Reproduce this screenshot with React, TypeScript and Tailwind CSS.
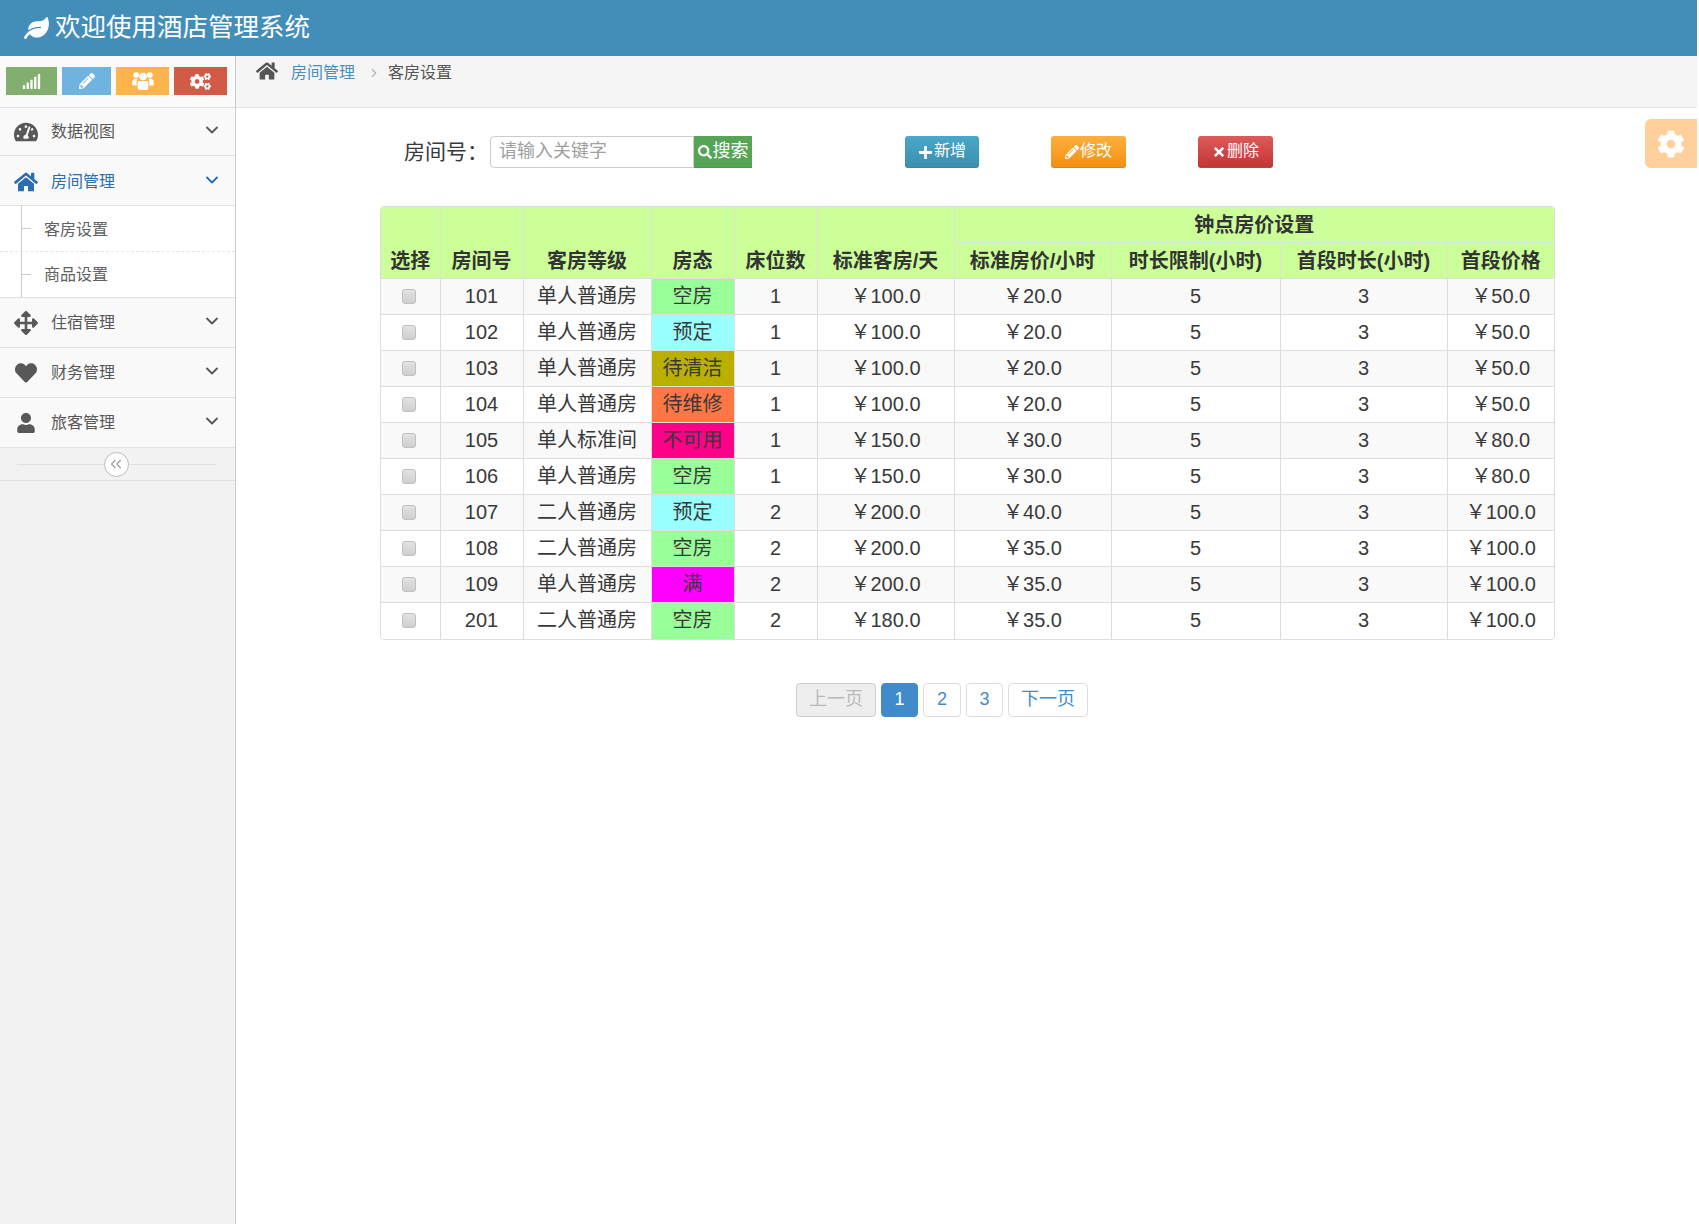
import React from 'react';
import {
  FaLeaf, FaSignal, FaPencilAlt, FaCogs, FaTachometerAlt, FaHome, FaArrowsAlt, FaHeart, FaUser,
  FaSearch, FaPlus, FaTimes, FaCog,
} from 'react-icons/fa';
import { ChevronDown, ChevronRight, ChevronsLeft } from 'lucide-react';

const font = 'font-["Liberation_Sans","Noto_Sans_CJK_SC",sans-serif]';

const menu = [
  { label: '数据视图', icon: <FaTachometerAlt className="w-[24px] h-[22px]" /> },
  { label: '房间管理', icon: <FaHome className="w-[24px] h-[22px]" />, active: true },
  { label: '住宿管理', icon: <FaArrowsAlt className="w-[24px] h-[24px]" /> },
  { label: '财务管理', icon: <FaHeart className="w-[24px] h-[22px]" /> },
  { label: '旅客管理', icon: <FaUser className="w-[20px] h-[20px]" /> },
];

const columns = [59, 83, 128, 83, 83, 137, 157, 169, 167, 107];

const status: Record<string, string> = {
  空房: 'bg-[#99ff99]',
  预定: 'bg-[#99ffff]',
  待清洁: 'bg-[#bbb000]',
  待维修: 'bg-[#ff7744]',
  不可用: 'bg-[#ff0088]',
  满: 'bg-[#ff00ff]',
};

const rooms = [
  ['101', '单人普通房', '空房', '1', '100.0', '20.0', '5', '3', '50.0'],
  ['102', '单人普通房', '预定', '1', '100.0', '20.0', '5', '3', '50.0'],
  ['103', '单人普通房', '待清洁', '1', '100.0', '20.0', '5', '3', '50.0'],
  ['104', '单人普通房', '待维修', '1', '100.0', '20.0', '5', '3', '50.0'],
  ['105', '单人标准间', '不可用', '1', '150.0', '30.0', '5', '3', '80.0'],
  ['106', '单人普通房', '空房', '1', '150.0', '30.0', '5', '3', '80.0'],
  ['107', '二人普通房', '预定', '2', '200.0', '40.0', '5', '3', '100.0'],
  ['108', '二人普通房', '空房', '2', '200.0', '35.0', '5', '3', '100.0'],
  ['109', '单人普通房', '满', '2', '200.0', '35.0', '5', '3', '100.0'],
  ['201', '二人普通房', '空房', '2', '180.0', '35.0', '5', '3', '100.0'],
];

const th = 'border-l border-[#dde6cc] first:border-l-0 px-0 font-bold text-[20px] text-[#333] text-center align-bottom';
const td = 'border-l border-t border-[#dddddd] first:border-l-0 p-0 pb-[2px] text-[20px] text-[#393939] text-center';

// FA4 style group icon, the one in the package is too flat
const UsersIcon = () => (
  <svg viewBox="0 0 24 22" className="w-[22px] h-[20px]" fill="currentColor">
    <circle cx="4.5" cy="4.5" r="3.2" />
    <circle cx="19.5" cy="4.5" r="3.2" />
    <circle cx="12" cy="6" r="4.2" />
    <path d="M0 15c0-4 1-6.500 3-6.500h2.500C5 10 5 11.500 5 13v3H1.500C.5 16 0 15.700 0 15z" />
    <path d="M24 15c0-4-1-6.500-3-6.500h-2.500c.5 1.500.5 3 .5 4.500v3h3.500c1 0 1.500-.3 1.500-1z" />
    <path d="M6.500 11c1.500 0 2.500 0 5.500 0s4 0 5.500 0c.5 2 .5 4 .5 6.500 0 2-1 3.500-3 3.500H9c-2 0-3-1.500-3-3.500 0-2.500 0-4.500.5-6.500z" />
  </svg>
);

const Sidebar = () => (
  <aside className="w-[236px] shrink-0 bg-[#f2f2f2] border-r border-[#cccccc]">
    <div className="h-[52px] flex items-start gap-[5px] pl-[6px] pt-[11px] bg-[#fafafa] border-b border-[#e0e0e0]">
      <div className="w-[51px] h-[28px] bg-[#82af6f] text-white flex items-center justify-center"><FaSignal className="w-[19px] h-[15px]" /></div>
      <div className="w-[49px] h-[28px] bg-[#6fb3e0] text-white flex items-center justify-center"><FaPencilAlt className="w-[16px] h-[16px]" /></div>
      <div className="w-[53px] h-[28px] bg-[#ffb44b] text-white flex items-center justify-center"><UsersIcon /></div>
      <div className="w-[53px] h-[28px] bg-[#d15b47] text-white flex items-center justify-center"><FaCogs className="w-[21px] h-[19px]" /></div>
    </div>
    {menu.map((m, i) => (
      <React.Fragment key={m.label}>
        <div className={`flex items-center bg-[#f9f9f9] border-b border-[#e0e0e0] ${i === 0 ? 'h-[48px]' : 'h-[50px]'} ${m.active ? 'pt-[2px] text-[#2b6eb0]' : 'text-[#585858]'}`}>
          <span className="ml-[14px] w-[24px] mr-[13px] flex justify-center shrink-0">{m.icon}</span>
          <span className="text-[16px]">{m.label}</span>
          <ChevronDown className="ml-auto mr-[13px] mb-[4px] w-[20px] h-[20px]" strokeWidth={2.2} />
        </div>
        {m.active && (
          <div className="bg-white border-b border-[#e0e0e0] relative">
            <div className="absolute left-[21px] top-0 bottom-0 border-l border-[#cccccc]" />
            {['客房设置', '商品设置'].map((s, j) => (
              <div key={s} className={`flex items-center pl-[44px] text-[16px] text-[#616161] relative ${j === 0 ? 'h-[46px] pt-[2px] border-b border-dashed border-[#e4e4e4]' : 'h-[45px]'}`}>
                <span className="absolute left-[21px] top-[22px] w-[10px] border-t border-[#cccccc]" />
                {s}
              </div>
            ))}
          </div>
        )}
      </React.Fragment>
    ))}
    <div className="h-[33px] flex items-center justify-center relative border-b border-[#e0e0e0] pr-[3px]">
      <div className="absolute left-[17px] w-[199px] top-[16px] border-t border-[#e0e0e0]" />
      <div className="relative w-[25px] h-[25px] rounded-full bg-white border border-[#bbbbbb] text-[#999999] flex items-center justify-center">
        <ChevronsLeft className="w-[18px] h-[18px]" strokeWidth={1.5} />
      </div>
    </div>
  </aside>
);

const ActionButton = ({ icon, label, className }: { icon: React.ReactNode; label: string; className: string }) => (
  <button className={`h-[32px] rounded-[3px] text-white text-[16px] flex items-center justify-center gap-[1px] border-b border-black/20 pb-[2px] ${className}`}>
    {icon}
    {label}
  </button>
);

const PageButton = ({ children, className }: { children: React.ReactNode; className: string }) => (
  <button className={`h-[34px] rounded-[4px] text-[18px] border flex items-center justify-center ${className}`}>{children}</button>
);

export default function App() {
  return (
    <div className={`${font} min-h-[1224px] flex flex-col bg-white mr-[2px]`}>
      <header className="h-[56px] bg-[#438eb9] flex items-center pl-[23px] text-white">
        <FaLeaf className="w-[27px] h-[22px]" />
        <span className="text-[25.5px] ml-[5px] mb-[2px]">欢迎使用酒店管理系统</span>
      </header>
      <div className="flex flex-1">
        <Sidebar />
        <main className="flex-1 relative">
          <div className="h-[52px] bg-[#f5f5f5] border-b border-[#e5e5e5] flex items-start pt-[5px] pl-[20px] text-[16px]">
            <FaHome className="w-[22px] h-[20px] text-[#555555]" />
            <span className="ml-[13px] text-[#4c8fbd]">房间管理</span>
            <ChevronRight className="ml-[12px] mt-[4px] w-[14px] h-[16px] text-[#b2b6bf]" strokeWidth={2} />
            <span className="ml-[7px] text-[#555555]">客房设置</span>
          </div>

          <div className="absolute right-0 top-[63px] w-[52px] h-[49px] bg-[#ffcf9c] rounded-l-[6px] text-white flex items-center justify-center">
            <FaCog className="w-[28px] h-[28px]" />
          </div>

          <div className="ml-[168px] mt-[28px] flex items-center">
            <span className="text-[21px] text-[#393939] w-[86px] mb-[1px]">房间号：</span>
            <input
              placeholder="请输入关键字"
              className="w-[204px] h-[32px] border border-[#cccccc] rounded-l-[4px] px-[8px] pb-[1px] text-[18px] placeholder:text-[#a0a0a0] outline-none"
            />
            <button className="w-[58px] h-[32px] bg-[#56a556] border-b border-[#4a9c4a] text-white text-[18px] flex items-center justify-center gap-[1px]">
              <FaSearch className="w-[14px] h-[14px]" />
              搜索
            </button>
            <ActionButton className="w-[74px] ml-[153px] bg-gradient-to-b from-[#4aa8c9] to-[#3b8fb0]" icon={<FaPlus className="w-[15px] h-[15px] mt-[3px]" />} label="新增" />
            <ActionButton className="w-[75px] ml-[72px] bg-gradient-to-b from-[#fbb03b] to-[#f58f0e]" icon={<FaPencilAlt className="w-[14px] h-[14px] mt-[3px]" />} label="修改" />
            <ActionButton className="w-[75px] ml-[72px] bg-gradient-to-b from-[#dd5a5a] to-[#c23535]" icon={<FaTimes className="w-[14px] h-[14px] mt-[3px]" />} label="删除" />
          </div>

          <div className="ml-[144px] mt-[37px] w-[1175px] border border-[#dddddd] rounded-[4px] overflow-hidden box-border">
            <table className="border-collapse table-fixed w-full">
              <colgroup>
                {columns.map((w, i) => (
                  <col key={i} style={{ width: w }} />
                ))}
              </colgroup>
              <thead className="bg-[#ccff99]">
                <tr className="h-[36px]">
                  <th rowSpan={2} className={th}><div className="pb-[2px]">选择</div></th>
                  <th rowSpan={2} className={th}><div className="pb-[2px]">房间号</div></th>
                  <th rowSpan={2} className={th}><div className="pb-[2px]">客房等级</div></th>
                  <th rowSpan={2} className={th}><div className="pb-[2px]">房态</div></th>
                  <th rowSpan={2} className={th}><div className="pb-[2px]">床位数</div></th>
                  <th rowSpan={2} className={th}><div className="pb-[2px]">标准客房/天</div></th>
                  <th colSpan={4} className={`${th} !align-middle border-b pt-[1px]`}>钟点房价设置</th>
                </tr>
                <tr className="h-[36px]">
                  {['标准房价/小时', '时长限制(小时)', '首段时长(小时)', '首段价格'].map((h) => (
                    <th key={h} className="border-l border-[#dde6cc] font-bold text-[20px] text-[#333] text-center">{h}</th>
                  ))}
                </tr>
              </thead>
              <tbody>
                {rooms.map((r, i) => (
                  <tr key={r[0]} className={`h-[36px] ${i % 2 === 0 ? 'bg-[#f9f9f9]' : 'bg-white'}`}>
                    <td className={td}>
                      <span className="inline-block w-[14px] h-[15px] rounded-[3px] bg-gradient-to-b from-[#e2e2e2] to-[#cfcfcf] border border-[#c0c0c0] align-middle mr-[3px] mb-[2px]" />
                    </td>
                    <td className={td}>{r[0]}</td>
                    <td className={td}>{r[1]}</td>
                    <td className={`${td} ${status[r[2]]}`}>{r[2]}</td>
                    <td className={td}>{r[3]}</td>
                    <td className={td}>￥{r[4]}</td>
                    <td className={td}>￥{r[5]}</td>
                    <td className={td}>{r[6]}</td>
                    <td className={td}>{r[7]}</td>
                    <td className={td}>￥{r[8]}</td>
                  </tr>
                ))}
              </tbody>
            </table>
          </div>

          <div className="ml-[560px] mt-[43px] flex gap-[5px]">
            <PageButton className="w-[80px] bg-[#eeeeee] border-[#cccccc] text-[#b9b9b9]">上一页</PageButton>
            <PageButton className="w-[37px] bg-[#428bca] border-[#428bca] text-white">1</PageButton>
            <PageButton className="w-[38px] bg-white border-[#dddddd] text-[#428bca]">2</PageButton>
            <PageButton className="w-[37px] bg-white border-[#dddddd] text-[#428bca]">3</PageButton>
            <PageButton className="w-[80px] bg-white border-[#dddddd] text-[#428bca]">下一页</PageButton>
          </div>
        </main>
      </div>
    </div>
  );
}
